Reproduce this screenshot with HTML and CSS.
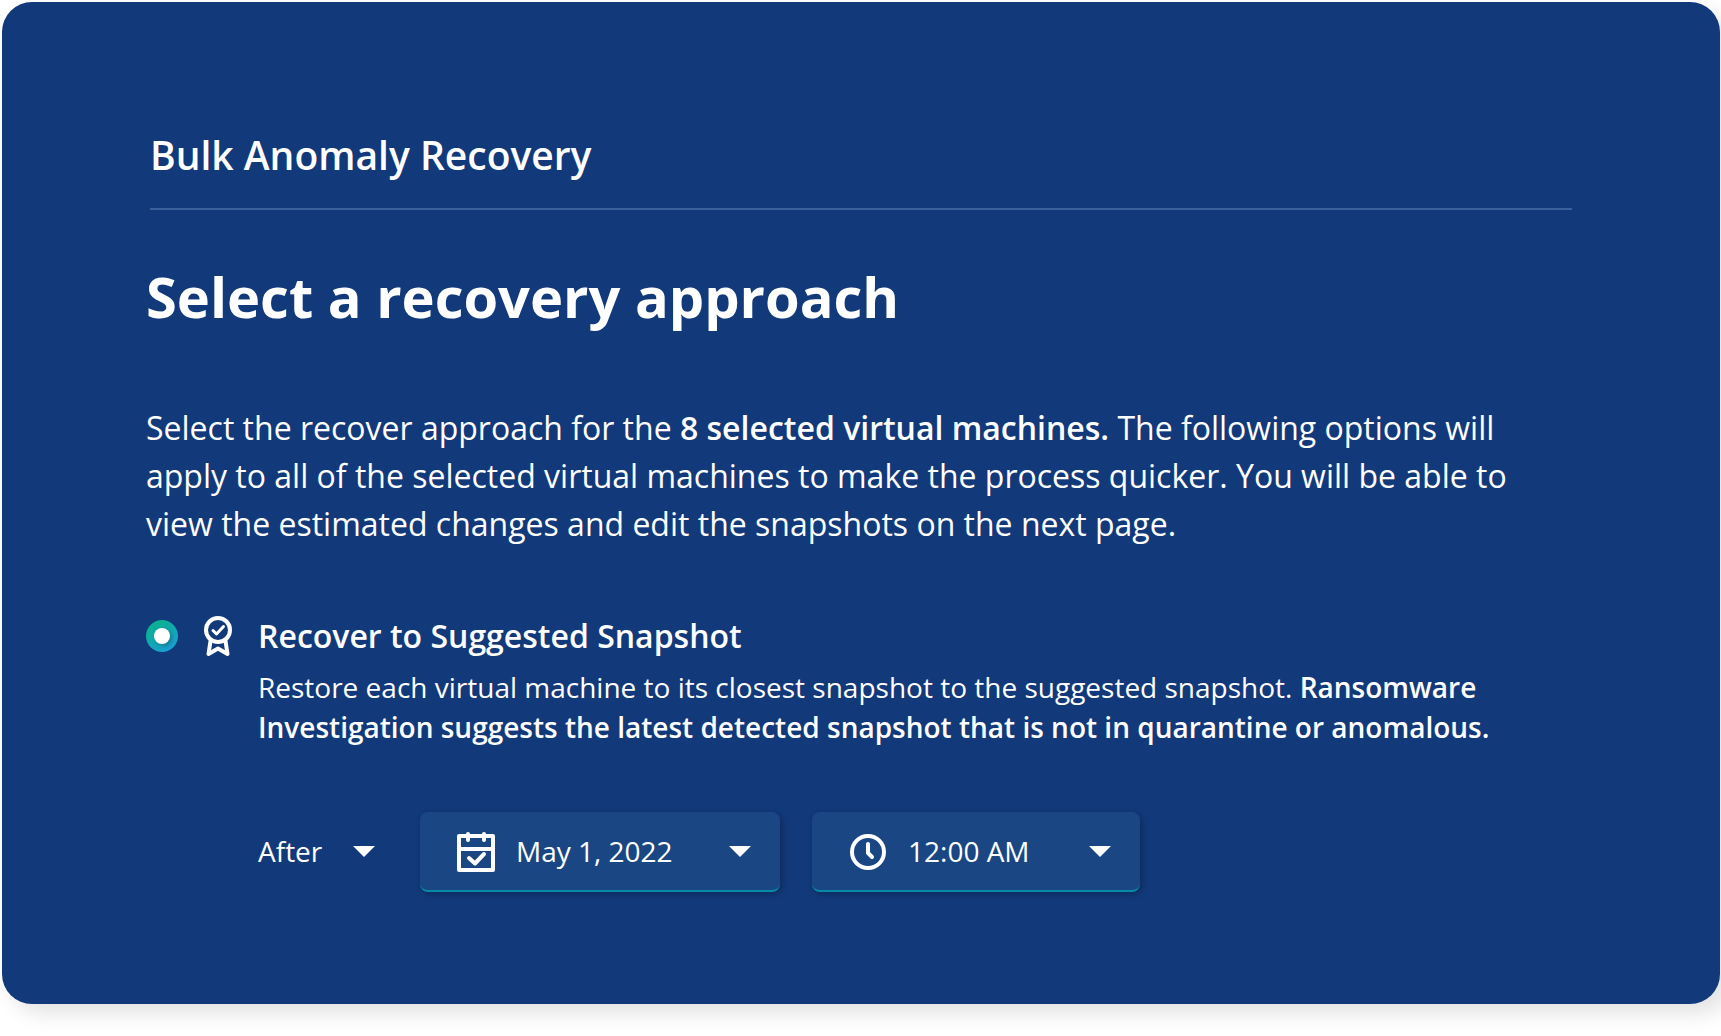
FILE: index.html
```html
<!DOCTYPE html>
<html lang="en">
<head>
  <meta charset="UTF-8" />
  <meta name="viewport" content="width=device-width,initial-scale=1" />
  <title>Bulk Anomaly Recovery</title>
  <link rel="stylesheet" href="styles.css">
</head>

<body>
  <main class="card">
    <header class="card-head">
      <h2>Bulk Anomaly Recovery</h2>
    </header>

    <h1>Select a recovery approach</h1>

    <p class="intro">Select the recover approach for the <strong>8 selected virtual machines.</strong> The following options will apply to all of the selected virtual machines to make the process quicker. You will be able to view the estimated changes and edit the snapshots on the next page.</p>

    <form class="option">
      <input class="radio" type="radio" id="suggested" name="approach" checked>
      <svg class="icon" viewBox="0 0 40 40" fill="none" stroke="#fff" stroke-linecap="round" stroke-linejoin="round" aria-hidden="true">
        <circle cx="20" cy="14" r="12" stroke-width="4"/>
        <path d="M15 14.5l3.5 3.500 7-7.500" stroke-width="3"/>
        <path d="M12.500 25L10.500 38l9.500-5.500 9.500 5.500-2-13" stroke-width="4"/>
      </svg>
      <label class="option-title" for="suggested">Recover to Suggested Snapshot</label>

      <div class="option-body">
        <p>Restore each virtual machine to its closest snapshot to the suggested snapshot. <strong>Ransomware Investigation suggests the latest detected snapshot that is not in quarantine or anomalous.</strong></p>

        <div class="filters">
          <select class="plain" aria-label="Condition">
            <option>After</option>
          </select>

          <label class="field field-date">
            <svg class="icon" viewBox="0 0 40 40" fill="none" stroke="#fff" stroke-linecap="round" stroke-linejoin="round" aria-hidden="true">
              <path d="M3 5h34v34H3zM3 18h34M12 3v6M28 3v6" stroke-width="4"/>
              <path d="M13 27l6 5.500 9-9.500" stroke-width="4"/>
            </svg>
            <select aria-label="Date">
              <option>May 1, 2022</option>
            </select>
          </label>

          <label class="field field-time">
            <svg class="icon" viewBox="0 0 40 40" fill="none" stroke="#fff" stroke-width="4" stroke-linecap="round" stroke-linejoin="round" aria-hidden="true">
              <circle cx="20" cy="21" r="16"/>
              <path d="M20 13v9l4 4"/>
            </svg>
            <select aria-label="Time">
              <option>12:00 AM</option>
            </select>
          </label>
        </div>
      </div>
    </form>
  </main>
</body>
</html>
```
FILE: styles.css
```css
:root{
  --bg:#12397a;
  --line:#3a619c;
  --field:#1a4783;
  --teal:#078ba5;
  --gutter:144px;
}
*{box-sizing:border-box;}
body{
  margin:0;
  padding:2px 1px 32px 2px;
  font-family:"Open Sans","Noto Sans",sans-serif;
  background:#fff;
  color:#fff;
}
.card{
  padding:128px var(--gutter) 112px;
  background:var(--bg);
  border-radius:30px;
  box-shadow:10px 10px 20px rgba(0,0,0,.11);
}
.card-head{
  margin:0 4px;
  padding-bottom:28px;
  border-bottom:2px solid var(--line);
}
h2{
  margin:0;
  font-size:39px;
  font-weight:600;
  line-height:50px;
}
h1{
  margin:50px 0 72px;
  font-size:56px;
  font-weight:700;
  line-height:72px;
}
p{ margin:0; }
strong{ font-weight:600; }
.intro{
  font-size:32px;
  line-height:48px;
}

.option{
  margin-top:68px;
  display:grid;
  grid-template-columns:32px 40px 1fr;
  column-gap:20px;
  row-gap:11px;
  align-items:center;
}
.option-title{
  font-size:32px;
  font-weight:600;
  line-height:40px;
}
.option-body{
  grid-column:3;
  font-size:28px;
  line-height:40px;
}
.icon{
  width:40px;
  height:40px;
  flex:none;
  display:block;
  overflow:visible;
}
.radio{
  appearance:none;
  width:32px;
  height:32px;
  margin:0;
  display:grid;
  place-items:center;
  border-radius:50%;
  background:linear-gradient(150deg,#0bb090 15%,#1a9fd6 90%);
}
.radio:checked::before{
  content:"";
  width:16px;
  height:16px;
  border-radius:50%;
  background:#fff;
  box-shadow:2px 2px 4px rgba(0,0,0,.25);
}

/* snapshot date and time */
.filters{
  margin-top:65px;
  display:flex;
  gap:32px;
}
select{
  appearance:none;
  flex:1;
  min-width:0;
  height:78px;
  margin:0;
  padding:0 52px 0 0;
  border:0;
  font:inherit;
  color:inherit;
  cursor:pointer;
  background:url("data:image/svg+xml,<svg xmlns='http://www.w3.org/2000/svg' width='22' height='11' viewBox='0 0 22 11'><path d='M0 0h22L11 11z' fill='white'/></svg>") no-repeat right 29px center;
}
.plain{
  flex:none;
  width:130px;
  padding:0;
  background-position:right 13px center;
}
.field{
  width:360px;
  display:flex;
  align-items:center;
  gap:20px;
  padding-left:36px;
  background:var(--field);
  border-bottom:2px solid var(--teal);
  border-radius:8px;
  box-shadow:2px 2px 6px rgba(0,0,0,.25);
}
.field-time{ width:328px; }
```
